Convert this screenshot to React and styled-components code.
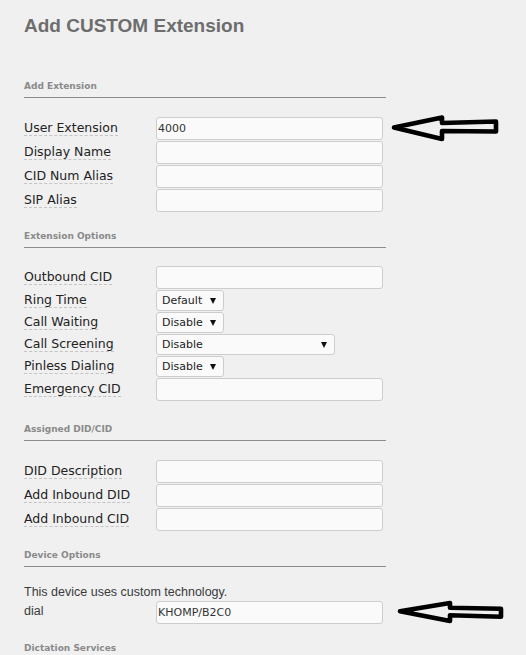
import React from "react";
import styled, { createGlobalStyle } from "styled-components";

const Global = createGlobalStyle`
  html, body { margin: 0; padding: 0; background: #f0f0f0; }
  body { min-height: 100vh; }
`;

const Page = styled.div`
  padding: 15px 0 0 24px;
  background: #f0f0f0;
  min-height: 655px;
  box-sizing: border-box;
  display: flex;
  flex-direction: column;
  align-items: flex-start;
`;

const Title = styled.h2`
  margin: 0;
  font: bold 19px/22px "Liberation Sans", Arial, sans-serif;
  color: #6d6d6d;
`;

const Section = styled.section`
  display: flex;
  flex-direction: column;
  align-items: stretch;
  width: 362px;
  margin-top: ${(p) => p.$top}px;
`;

const Heading = styled.h5`
  margin: 0;
  font: bold 9px/11px "DejaVu Sans", Verdana, sans-serif;
  color: #8a8a8a;
`;

const Rule = styled.hr`
  margin: 5px 0 0;
  border: 0;
  height: 1px;
  background: #8c8c8c;
  width: 362px;
`;

const Rows = styled.div`
  display: flex;
  flex-direction: column;
  gap: 1px;
  margin-top: ${(p) => p.$top ?? 19}px;
`;

const Row = styled.div`
  display: grid;
  grid-template-columns: 132px auto auto;
  align-items: center;
  justify-items: start;
`;

const Label = styled.span`
  font: 12.5px/15px "DejaVu Sans", Verdana, sans-serif;
  color: #222;
  border-bottom: 1px dashed #c4c4c4;
  white-space: nowrap;
  margin-top: -1px;
`;

const PlainLabel = styled.span`
  font: 12.5px/15px "Liberation Sans", Arial, sans-serif;
  color: #3a3a3a;
  margin-top: -2px;
`;

const Input = styled.div`
  box-sizing: border-box;
  width: 227px;
  height: 23px;
  border: 1px solid #cdcdcd;
  border-radius: 3px;
  background: #fafafa;
  display: flex;
  align-items: center;
  padding: 0 0 0 1px;
  font: 11px "DejaVu Sans", Verdana, sans-serif;
  color: #333;
`;

const Select = styled.div`
  box-sizing: border-box;
  width: ${(p) => p.$w}px;
  height: 21px;
  border: 1px solid #cdcdcd;
  border-radius: 3px;
  background: #fafafa;
  display: flex;
  align-items: center;
  justify-content: space-between;
  padding: 0 7px 0 5px;
  font: 11px "DejaVu Sans", Verdana, sans-serif;
  color: #222;
`;

const Caret = styled.span`
  width: 0;
  height: 0;
  border-left: 3px solid transparent;
  border-right: 3px solid transparent;
  border-top: 6px solid #111;
`;

const Note = styled.p`
  margin: 18px 0 0;
  font: 12.5px/15px "Liberation Sans", Arial, sans-serif;
  color: #3a3a3a;
  white-space: nowrap;
`;

const ArrowSvg = styled.svg`
  display: block;
  overflow: visible;
  margin-left: ${(p) => p.$left}px;
`;

function Arrow({ left, width, points }) {
  return (
    <ArrowSvg $left={left} width={width} height="23" viewBox={`0 0 ${width} 23`}>
      <polygon
        points={points}
        fill="none"
        stroke="#000"
        strokeWidth="4.6"
        strokeLinejoin="round"
      />
    </ArrowSvg>
  );
}

const TextRow = ({ label, value, arrow }) => (
  <Row>
    <Label>{label}</Label>
    <Input>{value}</Input>
    {arrow}
  </Row>
);

const SelectRow = ({ label, value, w }) => (
  <Row>
    <Label>{label}</Label>
    <Select $w={w}>
      <span>{value}</span>
      <Caret />
    </Select>
  </Row>
);

export default function App() {
  return (
    <>
      <Global />
      <Page>
        <Title>Add CUSTOM Extension</Title>

        <Section $top={44}>
          <Heading>Add Extension</Heading>
          <Rule />
          <Rows>
            <TextRow
              label="User Extension"
              value="4000"
              arrow={
                <Arrow
                  left={5}
                  width={114}
                  points="6,10.5 54,0.5 54,6 108,4.5 108,14.5 54,14 54,22"
                />
              }
            />
            <TextRow label="Display Name" />
            <TextRow label="CID Num Alias" />
            <TextRow label="SIP Alias" />
          </Rows>
        </Section>

        <Section $top={19}>
          <Heading>Extension Options</Heading>
          <Rule />
          <Rows $top={18}>
            <TextRow label="Outbound CID" />
            <SelectRow label="Ring Time" value="Default" w={68} />
            <SelectRow label="Call Waiting" value="Disable" w={68} />
            <SelectRow label="Call Screening" value="Disable" w={179} />
            <SelectRow label="Pinless Dialing" value="Disable" w={68} />
            <TextRow label="Emergency CID" />
          </Rows>
        </Section>

        <Section $top={23}>
          <Heading>Assigned DID/CID</Heading>
          <Rule />
          <Rows>
            <TextRow label="DID Description" />
            <TextRow label="Add Inbound DID" />
            <TextRow label="Add Inbound CID" />
          </Rows>
        </Section>

        <Section $top={19}>
          <Heading>Device Options</Heading>
          <Rule />
          <Note>This device uses custom technology.</Note>
          <Rows $top={1}>
            <Row>
              <PlainLabel>dial</PlainLabel>
              <Input>KHOMP/B2C0</Input>
              <Arrow
                left={5}
                width={118}
                points="12,10.3 62,2 62,6.8 113,7.8 113,15.8 62,14.3 62,20"
              />
            </Row>
          </Rows>
        </Section>

        <Section $top={19}>
          <Heading>Dictation Services</Heading>
          <Rule />
        </Section>
      </Page>
    </>
  );
}
